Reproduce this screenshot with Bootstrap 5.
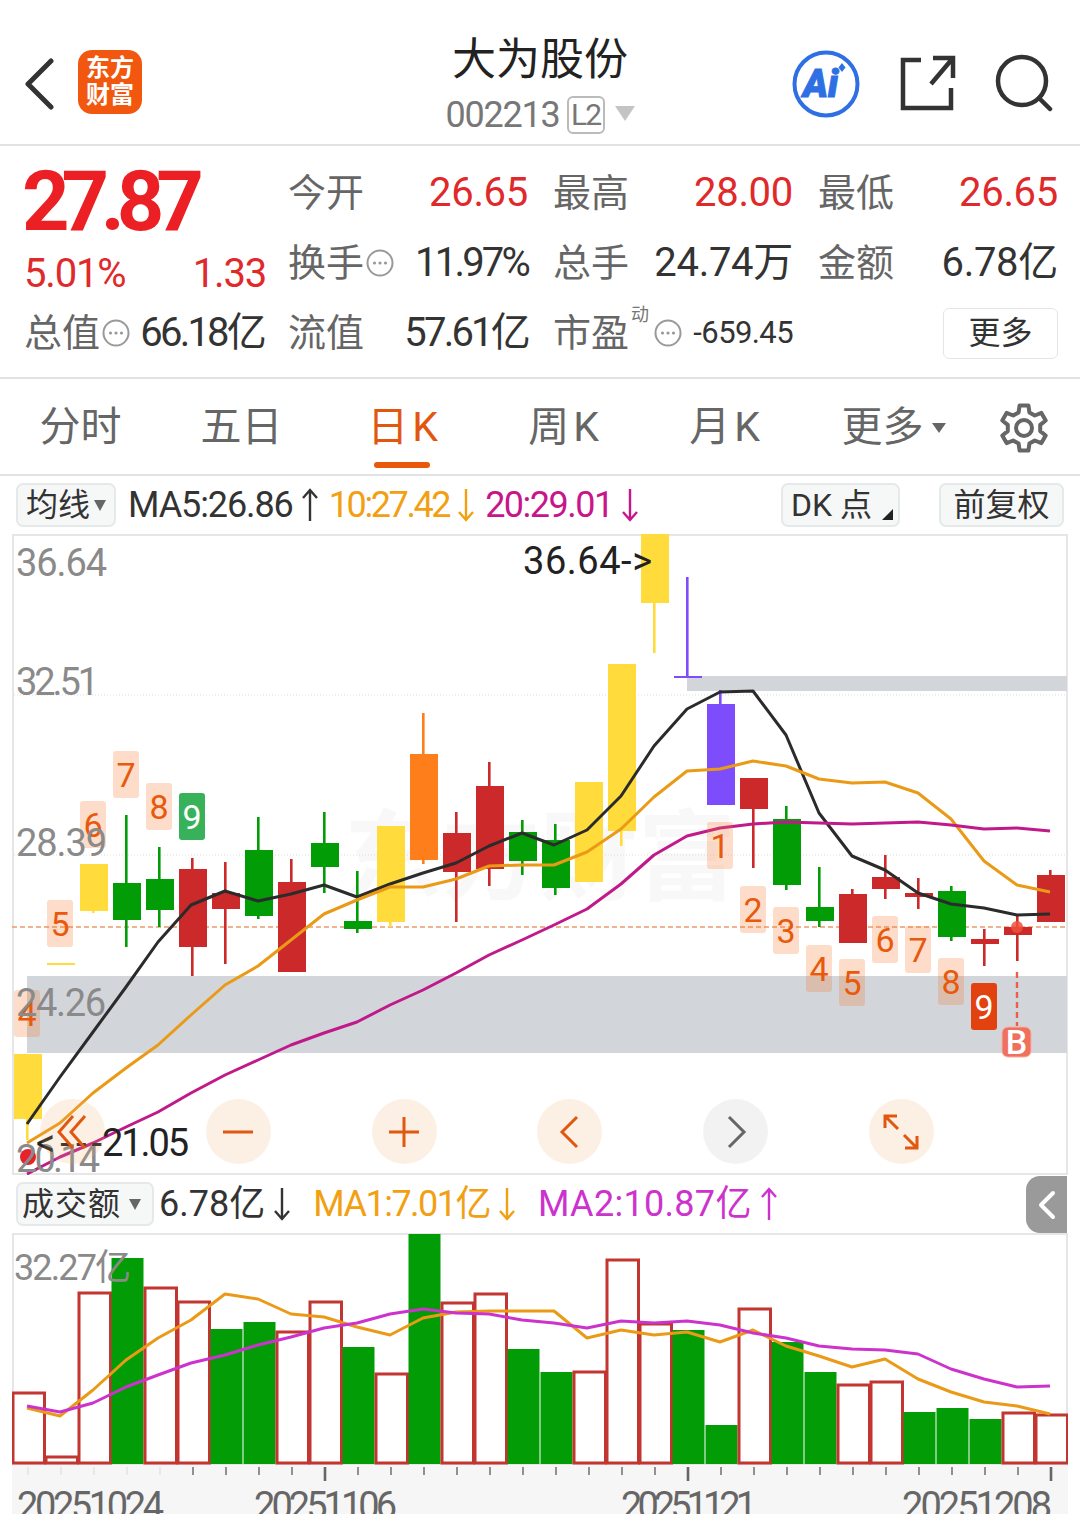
<!DOCTYPE html>
<html lang="zh-CN">
<head>
    <meta charset="UTF-8">
    <meta name="viewport" content="width=device-width, initial-scale=1.0">
    <title>大为股份 002213</title>
    <link href="https://cdn.jsdelivr.net/npm/bootstrap@5.3.0/dist/css/bootstrap.min.css" rel="stylesheet">
    <style>
        html, body {
            height: 1514px;
            overflow: hidden;
        }
        body {
            font-family: Roboto, "Noto Sans CJK SC", sans-serif;
            background: #fff;
            color: #333;
        }
        /* top bar */
        .top-bar {
            height: 146px;
            border-bottom: 2px solid #dfe3e3;
        }
        .top-side {
            flex: 1 1 0;
            padding: 50px 20px 0;
        }
        .icon-back {
            margin: 8px 0 0 2px;
        }
        .icon-share {
            margin: 4px 22px 0 15px;
        }
        .icon-search {
            margin: 4px 7px 0 16px;
        }
        .app-logo {
            width: 64px;
            height: 64px;
            margin-left: 22px;
            border-radius: 14px;
            background: #f2570f;
            color: #fff;
            font-size: 24px;
            font-weight: 700;
            line-height: 27px;
        }
        .stock-name {
            font-size: 44px;
            line-height: 54px;
            margin-top: 33px;
            color: #222;
        }
        .stock-code {
            font-size: 36px;
            line-height: 44px;
            margin-top: 6px;
            color: #777;
            letter-spacing: -1.2px;
        }
        .level-tag {
            font-size: 30px;
            line-height: 34px;
            width: 38px;
            border: 2px solid #bbb;
            border-radius: 6px;
            letter-spacing: -2px;
            margin: 0 10px 0 7px;
        }
        .drop-tri {
            width: 0;
            height: 0;
            border-left: 10px solid transparent;
            border-right: 10px solid transparent;
            border-top: 15px solid #c4c4c4;
            margin-bottom: 4px;
        }
        /* quote block */
        .quote-block {
            height: 233px;
            padding: 12px 0 0 24px;
            border-bottom: 2px solid #dfe3e3;
        }
        .quote-row {
            height: 70px;
        }
        .quote-left {
            flex: none;
            width: 240px;
            margin-right: 24px;
        }
        .quote-cell {
            flex: none;
            width: 240px;
            margin-right: 25px;
            font-size: 38px;
        }
        .quote-total {
            font-size: 38px;
        }
        .q-label {
            color: #666;
        }
        .q-up {
            font-size: 40px;
            color: #e0292b;
            letter-spacing: -.3px;
        }
        .q-val {
            font-size: 40px;
            color: #333;
            letter-spacing: -.3px;
        }
        .q-val.is-tight {
            letter-spacing: -2.8px;
        }
        .big-price {
            font-size: 83px;
            font-weight: 700;
            line-height: 96px;
            color: #ec1f24;
            letter-spacing: -8.2px;
            margin: -4px 0 0 -2px;
        }
        .big-sub {
            height: 48px;
            margin-right: -2px;
            font-size: 40px;
            color: #e0292b;
            letter-spacing: -1.2px;
        }
        .dot-icon {
            width: 28px;
            height: 28px;
            margin-left: 2px;
        }
        .pe-mark {
            font-size: 18px;
            line-height: 18px;
            color: #777;
            align-self: flex-start;
            margin: 1px 3px 0 2px;
        }
        .pe-value {
            font-size: 31px;
            letter-spacing: -.6px;
            color: #333;
        }
        .more-btn.btn {
            --bs-btn-padding-x: 0;
            --bs-btn-padding-y: 0;
            --bs-btn-font-size: 32px;
            --bs-btn-color: #333;
            --bs-btn-border-color: #e4e6e6;
            --bs-btn-border-radius: 6px;
            width: 115px;
            height: 51px;
        }
        /* period tabs */
        .period-tabs {
            height: 97px;
            padding-top: 3px;
            border-bottom: 2px solid #dfe3e3;
        }
        .period-tab {
            width: 161px;
            font-size: 41px;
            color: #666;
        }
        .period-tab.is-on {
            color: #e2570f;
        }
        .period-tab.is-on::after {
            content: "";
            position: absolute;
            left: 52px;
            bottom: 6px;
            width: 56px;
            height: 6px;
            border-radius: 3px;
            background: #e8590c;
        }
        .tab-tri {
            width: 0;
            height: 0;
            border-left: 7px solid transparent;
            border-right: 7px solid transparent;
            border-top: 10px solid #666;
            margin-left: 8px;
        }
        .gear-icon {
            margin-left: 33px;
        }
        /* indicator bars */
        .ind-bar {
            height: 58px;
            padding: 0 16px;
            font-size: 36px;
            letter-spacing: -1.1px;
            white-space: nowrap;
        }
        .ind-box {
            height: 44px;
            background: #f6f8f8;
            border: 2px solid #e6e9e9;
            border-radius: 7px;
            font-size: 32px;
            color: #333;
            letter-spacing: 0;
        }
        .box-first {
            margin-right: 12px;
        }
        .ind-arrow {
            width: 18px;
            height: 34px;
            margin: 0 10px 0 8px;
        }
        .c-ma10 { color: #f2a012; }
        .c-ma20 { color: #c8158c; }
        .c-vma2 { color: #cc33cc; }
        .ls-tight { letter-spacing: -2.4px; }
        .ls-mid { letter-spacing: -1.5px; }
        .ls-none { letter-spacing: 0; }
        .ls-wide { letter-spacing: .3px; }
        .gap-ma { margin-left: 12px; }
        .box-tri {
            width: 0;
            height: 0;
            border-left: 6px solid transparent;
            border-right: 6px solid transparent;
            border-top: 11px solid #666;
        }
        .corner-tri {
            position: absolute;
            right: 5px;
            bottom: 5px;
            width: 0;
            height: 0;
            border-left: 11px solid transparent;
            border-bottom: 11px solid #222;
        }
        .box-dk {
            width: 119px;
        }
        .box-fq {
            width: 125px;
            margin-left: 39px;
        }
        .box-vol {
            width: 138px;
            margin-right: 5px;
            letter-spacing: 1px;
        }
        .fold-tab {
            position: absolute;
            right: 13px;
            top: 1px;
            width: 41px;
            height: 57px;
            background: #9a9a9a;
            border-radius: 14px 0 0 14px;
        }
        /* charts */
        .chart-frame {
            margin-left: 12px;
            width: 1056px;
            height: 641px;
        }
        .vol-frame {
            margin-left: 12px;
            width: 1056px;
            height: 281px;
        }
        .chart-frame > svg, .vol-frame > svg {
            display: block;
        }
        .chart-text {
            font-family: Roboto, "Noto Sans CJK SC", sans-serif;
        }
        .zoom-btns {
            position: absolute;
            left: 28px;
            right: 134px;
            top: 565px;
        }
        .round-btn.btn {
            width: 65px;
            height: 65px;
            border-radius: 50%;
            background: rgba(240, 170, 110, .18);
            padding: 0;
            border: 0;
        }
        .round-btn.is-off {
            background: rgba(0, 0, 0, .05);
        }
    </style>
</head>
<body>
    <!-- top bar -->
    <div class="top-bar d-flex">
        <div class="top-side d-flex align-items-start">
            <svg width="34" height="52" viewBox="0 0 34 52" class="icon-back" fill="none" stroke="#333" stroke-width="5" stroke-linecap="round" stroke-linejoin="round"><path d="M29 3 6 26l23 23"/></svg>
            <div class="app-logo d-flex align-items-center justify-content-center text-center">东方<br>财富</div>
        </div>
        <div class="text-center">
            <div class="stock-name">大为股份</div>
            <div class="stock-code d-flex align-items-center justify-content-center">002213<span class="level-tag">L2</span><span class="drop-tri"></span></div>
        </div>
        <div class="top-side d-flex align-items-start justify-content-end">
            <svg width="68" height="68" viewBox="0 0 68 68" class="me-4">
                <circle cx="34" cy="34" r="31.5" fill="#fff" stroke="#2f6fe4" stroke-width="4"/>
                <text x="11" y="47" class="chart-text" font-size="38" font-weight="900" font-style="italic" fill="#2f6fe4" stroke="#2f6fe4" stroke-width="1">Ai</text>
                <path d="M50 13l3.5 4.5-3.5 4.5-3.5-4.5z" fill="#2f6fe4"/>
            </svg>
            <svg width="58" height="58" viewBox="0 0 58 58" class="icon-share" fill="none" stroke="#333" stroke-width="4.5"><path d="M22 6H4v48h48V34M34 4h20v20M54 4 32 30"/></svg>
            <svg width="58" height="58" viewBox="0 0 58 58" class="icon-search" fill="none" stroke="#333" stroke-width="4.5" stroke-linecap="round"><circle cx="27" cy="27" r="24"/><path d="M44 44l11 11"/></svg>
        </div>
    </div>

    <!-- quote block -->
    <div class="quote-block d-flex">
        <div class="quote-left">
            <div class="big-price">27.87</div>
            <div class="big-sub d-flex justify-content-between align-items-center"><span>5.01%</span><span>1.33</span></div>
            <div class="d-flex align-items-center justify-content-between quote-row">
                <span class="q-label quote-total d-flex align-items-center">总值<svg class="dot-icon" viewBox="0 0 28 28"><use href="#dots"/></svg></span>
                <span class="q-val is-tight">66.18亿</span>
            </div>
        </div>
        <div>
            <div class="quote-row d-flex">
                <div class="quote-cell d-flex align-items-center justify-content-between"><span class="q-label">今开</span><span class="q-up">26.65</span></div>
                <div class="quote-cell d-flex align-items-center justify-content-between"><span class="q-label">最高</span><span class="q-up">28.00</span></div>
                <div class="quote-cell d-flex align-items-center justify-content-between"><span class="q-label">最低</span><span class="q-up">26.65</span></div>
            </div>
            <div class="quote-row d-flex">
                <div class="quote-cell d-flex align-items-center justify-content-between"><span class="q-label d-flex align-items-center">换手<svg class="dot-icon" viewBox="0 0 28 28"><use href="#dots"/></svg></span><span class="q-val is-tight">11.97%</span></div>
                <div class="quote-cell d-flex align-items-center justify-content-between"><span class="q-label">总手</span><span class="q-val">24.74万</span></div>
                <div class="quote-cell d-flex align-items-center justify-content-between"><span class="q-label">金额</span><span class="q-val">6.78亿</span></div>
            </div>
            <div class="quote-row d-flex">
                <div class="quote-cell d-flex align-items-center justify-content-between"><span class="q-label">流值</span><span class="q-val is-tight">57.61亿</span></div>
                <div class="quote-cell d-flex align-items-center justify-content-between">
                    <span class="d-flex align-items-center"><span class="q-label">市盈</span><span class="pe-mark">动</span><svg class="dot-icon" viewBox="0 0 28 28"><use href="#dots"/></svg></span>
                    <span class="pe-value">-659.45</span>
                </div>
                <div class="quote-cell d-flex align-items-center justify-content-end"><button type="button" class="btn more-btn">更多</button></div>
            </div>
        </div>
    </div>

    <svg width="0" height="0" class="position-absolute">
        <symbol id="dots" viewBox="0 0 28 28">
            <circle cx="14" cy="14" r="12.5" fill="none" stroke="#999" stroke-width="2"/>
            <circle cx="8.5" cy="14" r="1.6" fill="#999"/><circle cx="14" cy="14" r="1.6" fill="#999"/><circle cx="19.5" cy="14" r="1.6" fill="#999"/>
        </symbol>
    </svg>

    <!-- period tabs -->
    <div class="period-tabs d-flex align-items-center">
        <div class="period-tab text-center">分时</div>
        <div class="period-tab text-center">五日</div>
        <div class="period-tab text-center is-on position-relative h-100 d-flex align-items-center justify-content-center">日<span class="ms-1">K</span></div>
        <div class="period-tab text-center">周<span class="ms-1">K</span></div>
        <div class="period-tab text-center">月<span class="ms-1">K</span></div>
        <div class="period-tab d-flex align-items-center justify-content-center ps-3">更多<span class="tab-tri"></span></div>
        <svg width="50" height="50" viewBox="0 0 50 50" class="gear-icon" fill="none" stroke="#666" stroke-width="4" stroke-linejoin="round"><path id="gearPath" d=""/><circle cx="25" cy="25" r="8"/></svg>
    </div>

    <!-- main indicator bar -->
    <div class="ind-bar d-flex align-items-center">
        <div class="ind-box box-first d-flex align-items-center px-2 gap-1">均线<span class="box-tri"></span></div>
        <span>MA5:26.86</span><svg class="ind-arrow" viewBox="0 0 18 34" fill="none" stroke="#333" stroke-width="2.4"><path d="M9 33V2M2 10l7-8 7 8"/></svg>
        <span class="c-ma10 ls-tight">10:27.42</span><svg class="ind-arrow" viewBox="0 0 18 34" fill="none" stroke="#f2a012" stroke-width="2.4"><path d="M9 1v31M2 24l7 8 7-8"/></svg>
        <span class="c-ma20 ls-mid">20:29.01</span><svg class="ind-arrow" viewBox="0 0 18 34" fill="none" stroke="#c8158c" stroke-width="2.4"><path d="M9 1v31M2 24l7 8 7-8"/></svg>
        <div class="ind-box box-dk d-flex align-items-center position-relative ms-auto ps-2">DK&nbsp;点<span class="corner-tri"></span></div>
        <div class="ind-box box-fq d-flex align-items-center justify-content-center">前复权</div>
    </div>

    <!-- candle chart, drawn from the data in the script below -->
    <div class="chart-frame position-relative">
        <svg id="klineSvg" width="1056" height="641" viewBox="12 534 1056 641"></svg>
        <div class="zoom-btns d-flex justify-content-between">
            <button type="button" class="btn round-btn"><svg width="40" height="40" viewBox="0 0 40 40" fill="none" stroke="#e2570f" stroke-width="3"><path d="M20 4 6 20l14 16M32 4 18 20l14 16"/></svg></button>
            <button type="button" class="btn round-btn"><svg width="34" height="34" viewBox="0 0 34 34" fill="none" stroke="#e2570f" stroke-width="3"><path d="M2 17h30"/></svg></button>
            <button type="button" class="btn round-btn"><svg width="34" height="34" viewBox="0 0 34 34" fill="none" stroke="#e2570f" stroke-width="3"><path d="M2 17h30M17 2v30"/></svg></button>
            <button type="button" class="btn round-btn"><svg width="22" height="34" viewBox="0 0 22 34" fill="none" stroke="#e2570f" stroke-width="3"><path d="M18 2 3 17l15 15"/></svg></button>
            <button type="button" class="btn round-btn is-off"><svg width="22" height="34" viewBox="0 0 22 34" fill="none" stroke="#666" stroke-width="3"><path d="M4 2l15 15L4 32"/></svg></button>
            <button type="button" class="btn round-btn"><svg width="36" height="36" viewBox="0 0 36 36" fill="none" stroke="#e2570f" stroke-width="3"><path d="M2 14V2h12M2 2l13 13M34 22v12H22M34 34 21 21"/></svg></button>
        </div>
    </div>

    <!-- volume indicator bar -->
    <div class="ind-bar d-flex align-items-center position-relative">
        <div class="ind-box box-vol d-flex align-items-center ps-1 pe-2 gap-2">成交额<span class="box-tri"></span></div>
        <span class="ls-none">6.78亿</span><svg class="ind-arrow" viewBox="0 0 18 34" fill="none" stroke="#333" stroke-width="2.4"><path d="M9 1v31M2 24l7 8 7-8"/></svg>
        <span class="c-ma10 gap-ma ls-mid">MA1:7.01亿</span><svg class="ind-arrow" viewBox="0 0 18 34" fill="none" stroke="#f2a012" stroke-width="2.4"><path d="M9 1v31M2 24l7 8 7-8"/></svg>
        <span class="c-vma2 gap-ma ls-wide">MA2:10.87亿</span><svg class="ind-arrow" viewBox="0 0 18 34" fill="none" stroke="#cc33cc" stroke-width="2.4"><path d="M9 33V2M2 10l7-8 7 8"/></svg>
        <div class="fold-tab d-flex align-items-center justify-content-center"><svg width="20" height="30" viewBox="0 0 20 30" fill="none" stroke="#fff" stroke-width="4" stroke-linecap="round" stroke-linejoin="round"><path d="M16 3 4 15l12 12"/></svg></div>
    </div>

    <!-- volume chart and dates -->
    <div class="vol-frame">
        <svg id="volSvg" width="1056" height="281" viewBox="12 1233 1056 281"></svg>
    </div>

    <script src="https://cdn.jsdelivr.net/npm/bootstrap@5.3.0/dist/js/bootstrap.bundle.min.js"></script>
    <script>
        // gear: six teeth
        (function () {
            let pts = [];
            for (let i = 0; i < 6; i++) {
                const a = -90 + 60 * i;
                [[-19, 16.5], [-11, 23], [11, 23], [19, 16.5]].forEach(function (p) {
                    const r = (a + p[0]) * Math.PI / 180;
                    pts.push((25 + p[1] * Math.cos(r)).toFixed(1) + ' ' + (25 + p[1] * Math.sin(r)).toFixed(1));
                });
            }
            document.getElementById('gearPath').setAttribute('d', 'M' + pts.join('L') + 'Z');
        })();

        const RED = '#cc2a2a', GREEN = '#029c07', YELLOW = '#ffdc3c', ORANGE = '#ff7e1c', PURPLE = '#7d4dfb';
        const BLACK_L = '#2b2b2b', ORANGE_L = '#ea9a16', PINK_L = '#c0198a';

        // color, body top, body bottom, wick top, wick bottom
        const candles = [
            [YELLOW, 1054, 1119, 1054, 1140], [YELLOW, 963, 965, 963, 965], [YELLOW, 864, 911, 864, 913],
            [GREEN, 883, 920, 815, 947], [GREEN, 879, 910, 847, 927], [RED, 869, 947, 858, 976],
            [RED, 893, 909, 862, 964], [GREEN, 850, 916, 817, 919], [RED, 882, 972, 859, 972],
            [GREEN, 843, 867, 812, 893], [GREEN, 921, 929, 871, 933], [YELLOW, 826, 922, 826, 927],
            [ORANGE, 754, 860, 713, 864], [RED, 833, 872, 812, 922], [RED, 786, 869, 762, 886],
            [GREEN, 832, 861, 820, 875], [GREEN, 840, 888, 824, 895], [YELLOW, 782, 882, 782, 882],
            [YELLOW, 664, 831, 664, 846], [YELLOW, 534, 603, 534, 653], [PURPLE, 676, 678, 577, 678],
            [PURPLE, 704, 805, 690, 805], [RED, 778, 809, 778, 868], [GREEN, 819, 885, 806, 890],
            [GREEN, 907, 921, 867, 927], [RED, 894, 943, 889, 943], [RED, 877, 889, 855, 899],
            [RED, 893, 897, 878, 909], [GREEN, 891, 937, 886, 941], [RED, 939, 944, 929, 966],
            [RED, 927, 935, 915, 961], [RED, 875, 922, 870, 922]
        ];
        const xs = [27, 60, 93, 126, 158, 191, 225, 258, 291, 324, 357, 390, 423, 456, 489, 522, 554, 587, 621, 654, 687, 720, 753, 786, 819, 852, 885, 918, 951, 984, 1017, 1050];
        const ma5 = [1124, 1077, 1032, 987, 942, 905, 891, 901, 894, 885, 897, 884, 873, 863, 846, 833, 845, 830, 796, 746, 709, 692, 691, 735, 813, 856, 870, 893, 904, 908, 915, 914];
        const ma10 = [1143, 1123, 1093, 1068, 1045, 1015, 985, 966, 940, 914, 900, 887, 887, 879, 866, 865, 865, 852, 829, 797, 771, 769, 761, 766, 779, 783, 782, 793, 819, 861, 885, 892];
        const ma20 = [1174, 1157, 1143, 1127, 1112, 1093, 1075, 1060, 1045, 1033, 1022, 1005, 990, 973, 955, 940, 925, 909, 884, 855, 836, 828, 824, 822, 823, 824, 823, 822, 825, 829, 828, 831];

        // digit, left, top, kind
        const marks = [
            ['4', 14, 990, 0], ['5', 47, 900, 0], ['6', 80, 801, 0], ['7', 113, 751, 0], ['8', 146, 783, 0], ['9', 179, 793, 1],
            ['1', 707, 822, 0], ['2', 740, 886, 0], ['3', 773, 907, 0], ['4', 806, 945, 0], ['5', 839, 959, 0], ['6', 872, 916, 0],
            ['7', 905, 926, 0], ['8', 938, 958, 0], ['9', 971, 983, 2]
        ];
        // text, baseline centre, width
        const axisLabels = [['36.64', 562, 91], ['32.51', 681, 83], ['28.39', 842, 91], ['24.26', 1002, 90], ['20.14', 1158, 84]];

        function polyline(ys, color, width) {
            const p = ys.map(function (y, i) { return xs[i] + ',' + y; }).join(' ');
            return '<polyline points="' + p + '" fill="none" stroke="' + color + '" stroke-width="' + width + '" stroke-linejoin="round"/>';
        }

        let s = '<rect x="13" y="535" width="1054" height="639" fill="#fff" stroke="#e6e6e6" stroke-width="2"/>';
        s += '<text x="540" y="892" text-anchor="middle" class="chart-text" font-size="98" font-weight="700" fill="#f8f8f8">东方财富</text>';
        [695, 855].forEach(function (y) {
            s += '<line x1="14" x2="1067" y1="' + y + '" y2="' + y + '" stroke="#ddd" stroke-width="1" stroke-dasharray="1 2"/>';
        });
        s += '<rect x="27" y="976" width="1040" height="77" fill="#d2d5da"/>';
        s += '<rect x="687" y="676" width="380" height="15" fill="#d2d5da"/>';
        s += '<line x1="12" x2="1067" y1="927" y2="927" stroke="#ea9a68" stroke-width="1.6" stroke-dasharray="5 3"/>';

        candles.forEach(function (c, i) {
            const x = 27 + 33 * i;
            s += '<rect x="' + (x - 1) + '" y="' + c[3] + '" width="2.6" height="' + (c[4] - c[3]) + '" fill="' + c[0] + '"/>';
            s += '<rect x="' + (x - 13) + '" y="' + c[1] + '" width="28" height="' + (c[2] - c[1]) + '" fill="' + c[0] + '"/>';
        });

        s += polyline(ma5, BLACK_L, 3) + polyline(ma10, ORANGE_L, 3) + polyline(ma20, PINK_L, 3);

        marks.forEach(function (m) {
            const bg = m[3] === 1 ? '#38b25a' : m[3] === 2 ? '#e1420f' : 'rgba(247,120,50,.26)';
            const fg = m[3] === 0 ? '#e8590c' : '#fff';
            s += '<rect x="' + m[1] + '" y="' + m[2] + '" width="26" height="47" rx="3" fill="' + bg + '"/>';
            s += '<text x="' + (m[1] + 13) + '" y="' + (m[2] + 36) + '" text-anchor="middle" class="chart-text" font-size="34" fill="' + fg + '">' + m[0] + '</text>';
        });

        s += '<line x1="1017" x2="1017" y1="972" y2="1026" stroke="#e8604a" stroke-width="2.4" stroke-dasharray="6 4"/>';
        s += '<circle cx="1017" cy="927" r="6" fill="#f0503c" fill-opacity=".85"/>';
        s += '<rect x="1002" y="1027" width="29" height="30" rx="6" fill="#f0705e" stroke="#f8b0a4" stroke-width="1"/>';
        s += '<text x="1016.5" y="1054" text-anchor="middle" class="chart-text" font-size="34" font-weight="500" fill="#fff">B</text>';
        s += '<circle cx="28" cy="1157" r="8" fill="#e6232a"/>';

        axisLabels.forEach(function (a) {
            s += '<text x="16" y="' + (a[1] + 14) + '" textLength="' + a[2] + '" class="chart-text" font-size="38" fill="#8a8a8a">' + a[0] + '</text>';
        });
        s += '<text x="523" y="574" textLength="129" class="chart-text" font-size="38" fill="#222">36.64-&gt;</text>';
        s += '<text y="1156" class="chart-text" font-size="38" fill="#222"><tspan x="36" textLength="66">&lt;---</tspan><tspan x="102" textLength="87">21.05</tspan></text>';
        document.getElementById('klineSvg').innerHTML = s;

        // volume bars: [1 = hollow red, 0 = solid green, top]
        const bars = [
            [1, 1393], [1, 1457], [1, 1293], [0, 1258], [1, 1288], [1, 1302], [0, 1329], [0, 1322],
            [1, 1332], [1, 1302], [0, 1347], [1, 1374], [0, 1234], [1, 1303], [1, 1294], [0, 1349],
            [0, 1372], [1, 1372], [1, 1260], [1, 1324], [0, 1330], [0, 1425], [1, 1309], [0, 1342],
            [0, 1372], [1, 1385], [1, 1382], [0, 1412], [0, 1408], [0, 1419], [1, 1413], [1, 1415]
        ];
        const vma1 = [1408, 1416, 1390, 1360, 1338, 1320, 1294, 1299, 1314, 1317, 1327, 1335, 1318, 1312, 1311, 1311, 1311, 1338, 1330, 1335, 1332, 1342, 1330, 1346, 1356, 1367, 1359, 1379, 1392, 1402, 1406, 1414];
        const vma2 = [1406, 1412, 1403, 1387, 1375, 1363, 1355, 1345, 1337, 1328, 1323, 1314, 1309, 1313, 1314, 1320, 1323, 1328, 1321, 1323, 1321, 1325, 1333, 1338, 1346, 1349, 1350, 1354, 1369, 1379, 1387, 1386];

        let v = '<rect x="13" y="1234" width="1054" height="231" fill="#fff" stroke="#e6e6e6" stroke-width="2"/>';
        v += '<rect x="12" y="1465" width="1056" height="49" fill="#f6f6f6"/>';
        bars.forEach(function (b, i) {
            const x = 12 + 33 * i;
            if (b[0]) {
                v += '<rect x="' + (x + 1) + '" y="' + b[1] + '" width="31.5" height="' + (1463 - b[1]) + '" fill="#fff" stroke="#c23531" stroke-width="3"/>';
            } else {
                v += '<rect x="' + x + '.5" y="' + b[1] + '" width="32" height="' + (1464 - b[1]) + '" fill="#029c07"/>';
            }
        });
        v += '<text x="14" y="1280" textLength="117" class="chart-text" font-size="36" fill="#8a8a8a">32.27亿</text>';
        v += polyline(vma1, ORANGE_L, 3) + polyline(vma2, '#cc33cc', 3);

        for (let i = 0; i < 32; i++) {
            const x = 28 + 33 * i;
            const major = i === 9 || i === 20 || i === 31;
            const col = i < 5 ? '#e2e2e2' : '#666';
            v += '<line x1="' + x + '" x2="' + x + '" y1="1467" y2="' + (major ? 1481 : 1475) + '" stroke="' + col + '" stroke-width="' + (major ? 2.6 : 1.4) + '"/>';
        }
        [['20251024', 17, 147], ['20251106', 254, 143], ['20251121', 621, 136], ['20251208', 902, 150]].forEach(function (d) {
            v += '<text x="' + d[1] + '" y="1519" textLength="' + d[2] + '" class="chart-text" font-size="38" fill="#666">' + d[0] + '</text>';
        });
        document.getElementById('volSvg').innerHTML = v;
    </script>
</body>
</html>
